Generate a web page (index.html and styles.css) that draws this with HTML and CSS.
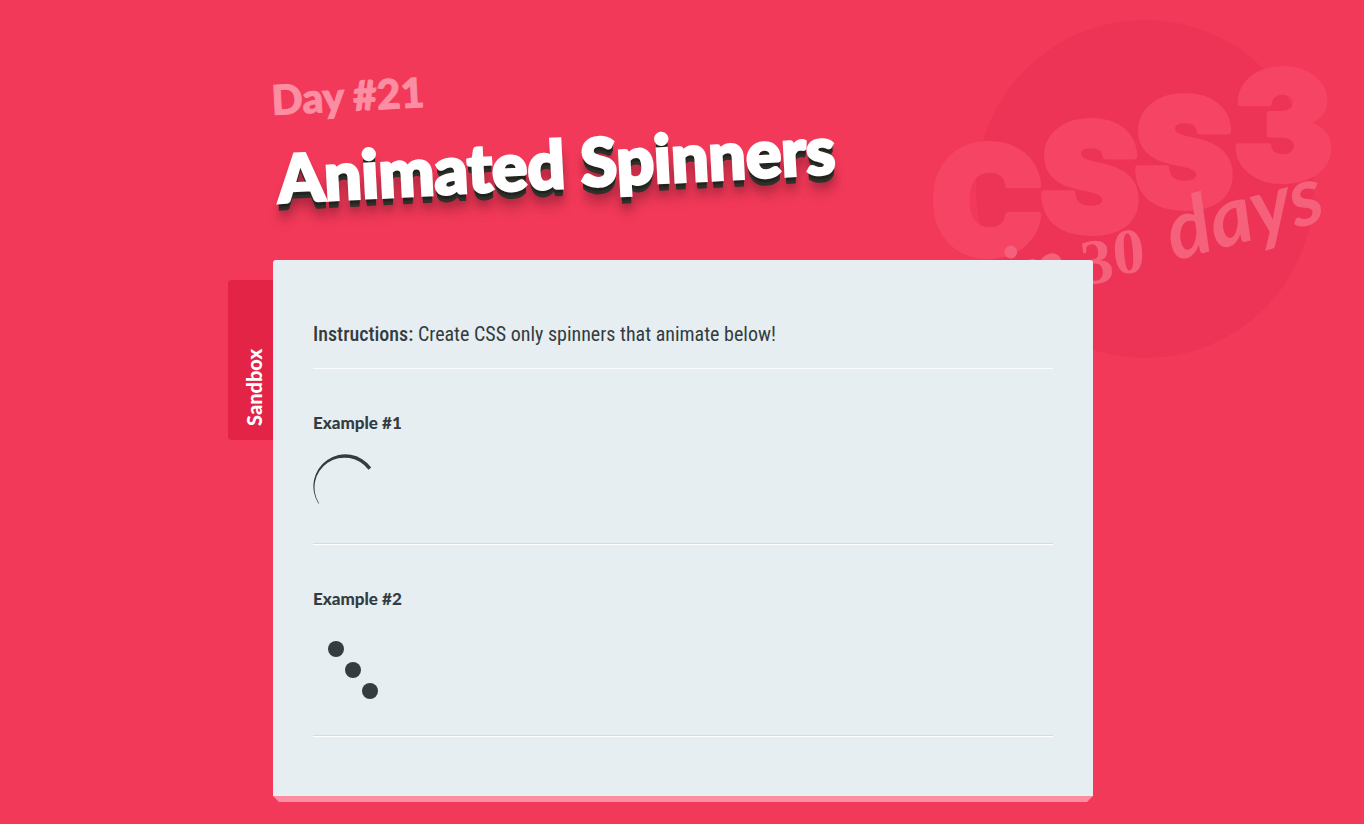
FILE: index.html
```html
<!DOCTYPE html>
<html lang="en">
<head>
<meta charset="utf-8">
<meta name="viewport" content="width=device-width, initial-scale=1">
<title>Animated Spinners</title>
<link rel="stylesheet" href="styles.css">
</head>
<body>
<svg class="logo" viewBox="0 0 400 340" role="img" aria-label="CSS3 in 30 days">
  <circle class="logo-disc" cx="209" cy="169" r="169"/>
  <g class="logo-css">
    <text x="-5" y="235">C</text>
    <text x="104" y="212">S</text>
    <text x="198" y="187">S</text>
    <text x="297" y="160">3</text>
  </g>
  <g class="logo-days">
    <text class="logo-script" transform="translate(76 288) rotate(-15)">in</text>
    <text class="logo-number" transform="translate(148 265) rotate(-8)">3</text>
    <text class="logo-number" transform="translate(178 254) rotate(-4)">0</text>
    <text class="logo-script" transform="translate(238 241) rotate(-15)">days</text>
  </g>
</svg>
<main class="page">
  <header class="header">
    <p class="day">Day #21</p>
    <h1 class="title">Animated Spinners</h1>
  </header>
  <div class="panel">
    <a class="tab" href="#sandbox">Sandbox</a>
    <div class="card-wrap">
      <div class="card" id="sandbox">
        <p class="instructions"><strong>Instructions:</strong> Create CSS only spinners that animate below!</p>
        <section class="example">
          <h2 class="example-title">Example #1</h2>
          <svg class="spinner" viewBox="0 0 64 64" aria-hidden="true">
            <path d="M58.2 13.5A31.98 31.98 0 0 0 5.5 49.7L6 49.3A29.91 29.91 0 0 1 55.5 15.8Z"/>
          </svg>
        </section>
        <section class="example example-dots">
          <h2 class="example-title">Example #2</h2>
          <svg class="spinner spinner-dots" viewBox="0 0 80 80" aria-hidden="true">
            <circle cx="23" cy="19" r="8"/>
            <circle cx="40" cy="40" r="8"/>
            <circle cx="57" cy="61" r="8"/>
          </svg>
        </section>
      </div>
      <div class="card-edge"></div>
    </div>
  </div>
</main>
</body>
</html>
```
FILE: styles.css
```css
* { box-sizing: border-box; }

body {
  margin: 0;
  background: #f33959;
  color: #343c41;
  font-family: "Roboto Condensed", Roboto, sans-serif;
}

p, h1, h2 { margin: 0; }

.logo {
  position: absolute;
  top: 20px;
  right: 28px;
  width: 400px;
  overflow: visible;
}
.logo-disc { fill: #ed3356; }
.logo-css {
  fill: #f64564;
  stroke: #f64564;
  stroke-width: 6px;
  stroke-linejoin: round;
  font: 900 150px Inter, sans-serif;
}
.logo-days { fill: #f5607b; }
.logo-script { font: italic 700 82px Lato, sans-serif; }
.logo-number { font: 700 64px "Liberation Serif", serif; }

.page {
  position: relative;
  max-width: 822px;
  margin: 0 auto;
  padding: 72px 0 22px 2px;
}

.header {
  height: 188px;
  font-family: Lato, sans-serif;
  font-weight: 900;
  transform: rotate(-3deg);
  transform-origin: left center;
}
.day {
  padding-left: 2px;
  font-size: 41px;
  line-height: 56px;
  color: #fb8ea2;
  -webkit-text-stroke: 1px #fb8ea2;
}
.title {
  padding: 6px 0 0 4px;
  font-size: 66px;
  font-weight: 900;
  line-height: 88px;
  color: #fff;
  white-space: nowrap;
  -webkit-text-stroke: 3px #fff;
  text-shadow: 0 1px #22231d, 0 2px #22231d, 0 3px #22231d, 0 4px #22231d,
    0 5px #292a24, 0 6px #30312b, 0 7px #30312b, 0 8px #30312b,
    0 12px 8px rgba(0, 0, 0, .25), 0 18px 14px rgba(0, 0, 0, .2);
}

.panel {
  display: flex;
  align-items: flex-start;
}
.tab {
  flex: none;
  width: 45px;
  height: 160px;
  margin: 20px 0 0 -45px;
  padding: 14px 14px 0 0;
  border-radius: 0 4px 4px 0;
  background: #e32447;
  color: #fff;
  font: 900 20px/24px Lato, sans-serif;
  text-decoration: none;
  writing-mode: vertical-rl;
  transform: rotate(180deg);
}
.card-wrap { flex: 1; }
.card {
  padding: 60px 40px;
  border-radius: 3px 3px 0 0;
  background: #e6eef1;
}
.card-edge {
  border: 6px solid transparent;
  border-top-color: #fb8ea2;
  border-bottom: 0;
}

.instructions {
  padding-bottom: 20px;
  border-bottom: 1px solid #fafcfd;
  font-size: 20px;
  line-height: 28px;
}
.instructions strong { font-weight: 500; }
.example {
  padding: 40px 0 25px;
  border-bottom: 1px solid #d5dcdf;
  box-shadow: 0 1px #fff;
}
.example-dots { padding-top: 41px; }
.example-title {
  font: 900 17px/28px Lato, sans-serif;
}
.spinner {
  display: block;
  width: 64px;
  margin-top: 17px;
  fill: currentColor;
}
.spinner-dots { width: 80px; }
```
